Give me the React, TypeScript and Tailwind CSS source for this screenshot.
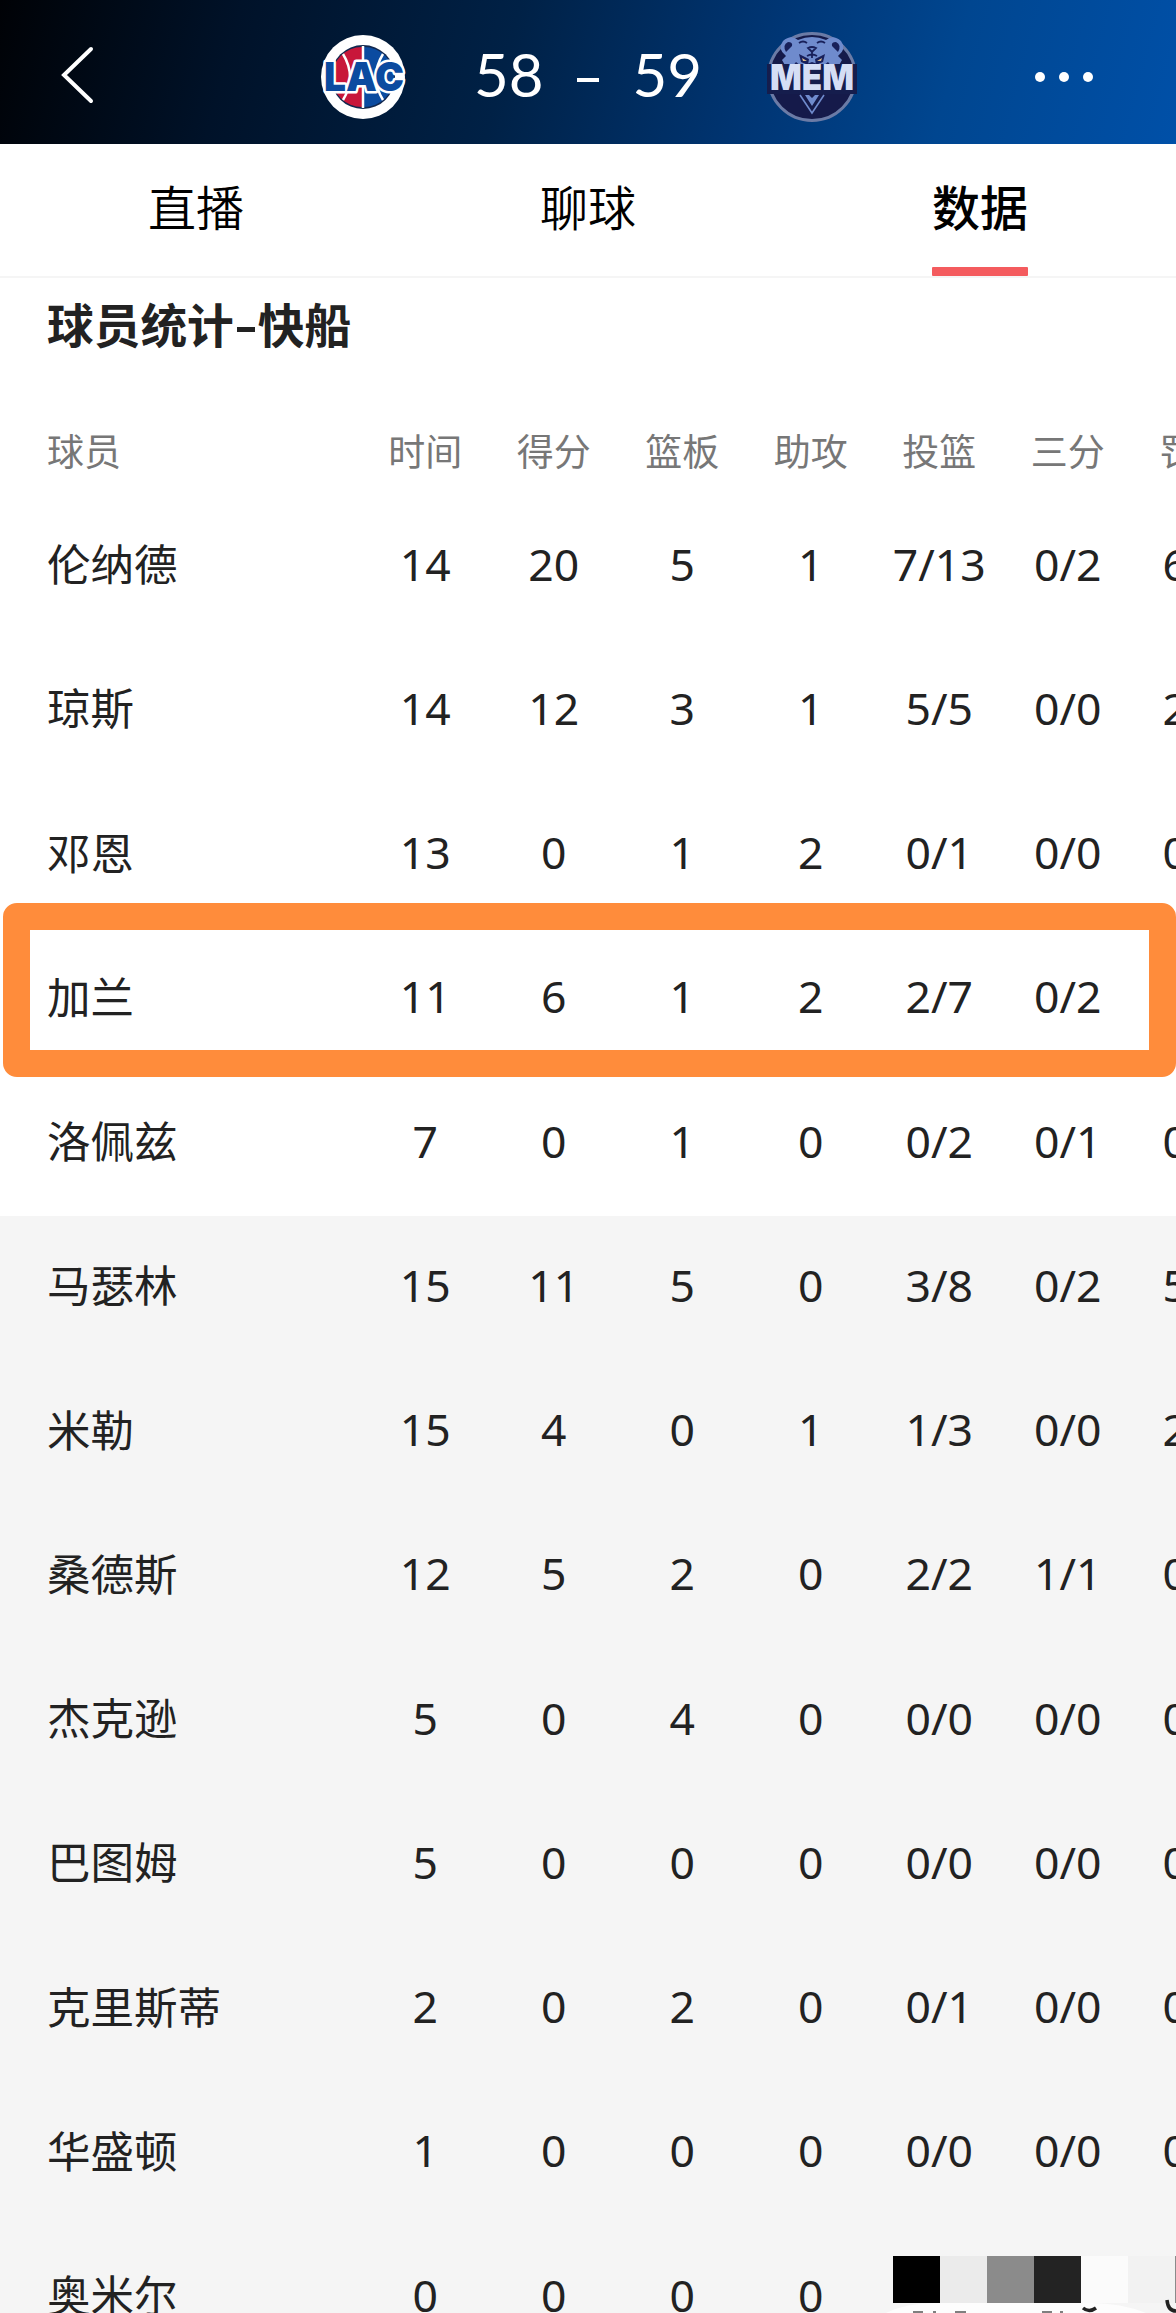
type Player = {
  name: string
  stats: string[]
  isStarter?: boolean
}

const COLUMNS = ['时间', '得分', '篮板', '助攻', '投篮', '三分', '罚球']

const PLAYERS: Player[] = [
  { name: '伦纳德', stats: ['14', '20', '5', '1', '7/13', '0/2', '6/6'], isStarter: true },
  { name: '琼斯', stats: ['14', '12', '3', '1', '5/5', '0/0', '2/2'], isStarter: true },
  { name: '邓恩', stats: ['13', '0', '1', '2', '0/1', '0/0', '0/0'], isStarter: true },
  { name: '加兰', stats: ['11', '6', '1', '2', '2/7', '0/2', '2/2'], isStarter: true },
  { name: '洛佩兹', stats: ['7', '0', '1', '0', '0/2', '0/1', '0/0'], isStarter: true },
  { name: '马瑟林', stats: ['15', '11', '5', '0', '3/8', '0/2', '5/5'] },
  { name: '米勒', stats: ['15', '4', '0', '1', '1/3', '0/0', '2/2'] },
  { name: '桑德斯', stats: ['12', '5', '2', '0', '2/2', '1/1', '0/0'] },
  { name: '杰克逊', stats: ['5', '0', '4', '0', '0/0', '0/0', '0/0'] },
  { name: '巴图姆', stats: ['5', '0', '0', '0', '0/0', '0/0', '0/0'] },
  { name: '克里斯蒂', stats: ['2', '0', '2', '0', '0/1', '0/0', '0/0'] },
  { name: '华盛顿', stats: ['1', '0', '0', '0', '0/0', '0/0', '0/0'] },
  { name: '奥米尔', stats: ['0', '0', '0', '0'] },
]

const MOSAIC = ['bg-black', 'bg-[#ebebeb]', 'bg-[#8b8b8b]', 'bg-[#232323]', 'bg-[#fbfbfb]', 'bg-[#f2f2f2]', 'bg-[#8b8b8b]']

function ClippersLogo() {
  return (
    <svg viewBox="0 0 96 96" className="h-24 w-24">
      <circle cx="47" cy="48" r="42" fill="#fff" />
      <circle cx="47" cy="48" r="32" fill="#12284f" />
      <path d="M46 18A30 30 0 0 0 46 78Z" fill="#c8173a" />
      <path d="M48 18A30 30 0 0 1 48 78Z" fill="#0b4ba0" />
      <path d="M47 17V79M27 25Q41 48 27 71M67 25Q53 48 67 71" fill="none" stroke="#fff" strokeWidth="2.5" />
      <text
        x="48"
        y="62"
        textAnchor="middle"
        textLength="80"
        lengthAdjust="spacingAndGlyphs"
        fontSize="40"
        fontWeight="900"
        fill="#0b4ba0"
        stroke="#fff"
        strokeWidth="5"
        strokeLinejoin="round"
        paintOrder="stroke"
        fontFamily="Inter, sans-serif"
      >
        LAC
      </text>
    </svg>
  )
}

function GrizzliesLogo() {
  return (
    <svg viewBox="0 0 96 96" className="h-24 w-24">
      <circle cx="48" cy="48" r="43.5" fill="#151a4a" stroke="#6b7ba6" strokeWidth="3" />
      {/* bear head */}
      <path
        d="M22 38L18 31L22 27Q13 20 19 12Q27 5 34 11Q48 5 62 11Q69 5 77 12Q83 20 74 27L78 31L74 38Z"
        fill="#6f8bcd"
      />
      <path d="M22 23Q18 16 24 13Q29 13 28 17ZM74 23Q78 16 72 13Q67 13 68 17Z" fill="#18205a" />
      <path d="M44 19Q48 17 52 19L48 23ZM48 23V29M43 27Q48 24 53 27M35 14Q39 11 43 14M53 14Q57 11 61 14" fill="none" stroke="#18205a" strokeWidth="1.8" />
      <path d="M35 25L45 30L44 36L37 33ZM61 25L51 30L52 36L59 33Z" fill="#18205a" />
      <path d="M38 29L43 32L39 32ZM58 29L53 32L57 32Z" fill="#d9b98a" />
      <path d="M28 38L32 33L37 37L48 33L59 37L64 33L68 38Z" fill="#18205a" />
      <path d="M3 35H93V65H3Z" fill="#151d4d" />
      <path d="M36 66L48 84L60 66" fill="none" stroke="#6f8bcd" strokeWidth="1.6" />
      <path d="M41 66H45L48 69L51 66H55L48 77Z" fill="#6f8bcd" />
      <text
        x="48"
        y="61"
        textAnchor="middle"
        textLength="84"
        lengthAdjust="spacingAndGlyphs"
        fontSize="36"
        fontWeight="900"
        fill="#d5def5"
        fontFamily="Inter, sans-serif"
      >
        MEM
      </text>
    </svg>
  )
}

function MatchHeader() {
  return (
    <header className="flex h-36 items-center bg-[linear-gradient(105deg,#000206_0%,#001229_20%,#002146_43%,#003675_65%,#004690_80%,#0050a8_100%)] pt-2.5 text-white">
      <svg viewBox="0 0 40 64" className="mb-1 ml-[57px] h-16 w-10" fill="none" stroke="currentColor" strokeWidth="4">
        <path d="M34 6L7 32L34 58" strokeLinecap="round" />
      </svg>
      <div className="ml-[219px] flex items-center">
        <ClippersLogo />
        <div className="mb-1.5 ml-[62px] flex w-[228px] items-center justify-between font-['Lato',sans-serif] text-[60px] leading-none">
          <span>58</span>
          <span className="mt-3 h-1 w-[22px] bg-white" />
          <span>59</span>
        </div>
        <div className="ml-[62px]">
          <GrizzliesLogo />
        </div>
      </div>
      <svg viewBox="0 0 64 16" className="ml-[172px] h-4 w-16" fill="currentColor">
        <circle cx="8" cy="8" r="5" />
        <circle cx="32" cy="8" r="5" />
        <circle cx="56" cy="8" r="5" />
      </svg>
    </header>
  )
}

function Tabs() {
  return (
    <nav className="grid h-[134px] grid-cols-3 border-b-2 border-[#f5f5f5] text-center text-[48px] leading-[127px] text-black">
      <span className="font-[350]">直播</span>
      <span className="font-[350]">聊球</span>
      <span className="relative font-medium">
        数据
        <i className="absolute bottom-0 left-1/2 h-[9px] w-24 -translate-x-1/2 rounded-[1px] bg-[#f45b5e]" />
      </span>
    </nav>
  )
}

function PlayerRow({ player }: { player: Player }) {
  return (
    <div className={`flex h-[144.25px] items-center pb-1 pl-[47px] ${player.isStarter ? 'bg-white' : 'bg-[#f5f5f5]'}`}>
      <span className="w-[314px] shrink-0 text-[43.5px]">{player.name}</span>
      {player.stats.map((value, i) => (
        <span key={i} className="w-[128.5px] shrink-0 pb-0.5 text-center text-[44.5px]">
          {value}
        </span>
      ))}
    </div>
  )
}

export default function App() {
  return (
    <div className="relative h-[2313px] w-[1176px] overflow-hidden bg-white font-['Noto_Sans','Noto_Sans_CJK_SC',sans-serif] leading-none text-[#222]">
      <MatchHeader />
      <Tabs />

      <h2 className="flex h-[94px] items-center pl-[47px] text-[46.7px] font-bold">
        球员统计<span className="flex w-[24px] justify-center"><i className="mt-2 h-[5px] w-[18px] bg-[#222]" /></span>快船
      </h2>

      <div className="flex h-[122.75px] items-center pl-[47px] pt-[36px] text-[37px] text-[#777]">
        <span className="w-[314px] shrink-0">球员</span>
        {COLUMNS.map((label) => (
          <span key={label} className="w-[128.5px] shrink-0 text-center">{label}</span>
        ))}
      </div>

      {PLAYERS.map((player) => (
        <PlayerRow key={player.name} player={player} />
      ))}

      {/* highlight around one player */}
      <div className="absolute left-[3px] top-[903px] h-[174px] w-[1173px] rounded-[14px] border-[27px] border-[#ff8c3b]" />

      {/* redacted corner */}
      <div className="absolute left-[893px] top-[2256px] flex">
        {MOSAIC.map((color, i) => (
          <span key={i} className={`h-[47px] w-[47px] shrink-0 ${color}`} />
        ))}
      </div>
      <svg viewBox="0 0 290 20" className="absolute left-[886px] top-[2293px] h-5 w-[290px]">
        <path d="M0 20Q20 10 50 10H205Q235 10 260 20Z" fill="#fdfdfd" />
        <path
          d="M27 19H37M47 19H50M69 19H80M156 19H166M174 19H177"
          fill="none"
          stroke="#555"
          strokeWidth="1.5"
        />
        <path d="M197 15Q203 20 210 15M281 7Q282 18 290 18" fill="none" stroke="#222" strokeWidth="3.5" />
      </svg>
    </div>
  )
}
